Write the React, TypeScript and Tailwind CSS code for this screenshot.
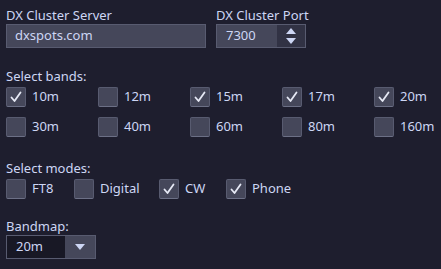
import React, { useState } from 'react';

const bands = ['10m', '12m', '15m', '17m', '20m', '30m', '40m', '60m', '80m', '160m'];
const modes = ['FT8', 'Digital', 'CW', 'Phone'];

const Check: React.FC<{ label: string; checked: boolean; onToggle: () => void; className?: string }> = ({
  label,
  checked,
  onToggle,
  className,
}) => (
  <label className={`flex items-center gap-[6px] cursor-pointer ${className ?? ''}`} onClick={onToggle}>
    <span className="w-[20px] h-[20px] bg-[#45475a] border border-[#585b70] border-b-[#6c7086] rounded-[2px] flex items-center justify-center">
      {checked && (
        <svg width="14" height="14" viewBox="0 0 14 14">
          <path d="M2.5 7.5 L5.5 11 L11.5 2.5" fill="none" stroke="#e6e9f5" strokeWidth="1.8" strokeLinecap="round" strokeLinejoin="round" />
        </svg>
      )}
    </span>
    <span>{label}</span>
  </label>
);

const App: React.FC = () => {
  const [selBands, setSelBands] = useState<string[]>(['10m', '15m', '17m', '20m']);
  const [selModes, setSelModes] = useState<string[]>(['CW', 'Phone']);

  const toggle = (list: string[], set: (v: string[]) => void, v: string) =>
    set(list.includes(v) ? list.filter((x) => x !== v) : [...list, v]);

  return (
    <div
      className="w-[441px] h-[269px] bg-[#1e1e2e] text-[#cdd6f4] text-[13px] px-[6px] pt-[6px]"
      style={{ fontFamily: '"Noto Sans", "Open Sans", sans-serif' }}
    >
      <div className="flex gap-[10px]">
        <div className="flex flex-col">
          <span className="leading-[18px]">DX Cluster Server</span>
          <div className="w-[200px] h-[24px] bg-[#45475a] border border-[#585b70] flex items-center px-[8px]">
            dxspots.com
          </div>
        </div>
        <div className="flex flex-col">
          <span className="leading-[18px]">DX Cluster Port</span>
          <div className="w-[90px] h-[24px] border border-[#585b70] flex">
            <div className="flex-1 bg-[#45475a] flex items-center px-[9px]">7300</div>
            <div className="w-[28px] bg-[#313244] flex flex-col items-center justify-center gap-[4px]">
              <svg width="10" height="6" viewBox="0 0 10 6"><path d="M0 6 L5 0 L10 6 Z" fill="#cdd6f4" /></svg>
              <svg width="10" height="6" viewBox="0 0 10 6"><path d="M0 0 L10 0 L5 6 Z" fill="#cdd6f4" /></svg>
            </div>
          </div>
        </div>
      </div>

      <div className="mt-[19px] leading-[18px]">Select bands:</div>
      <div className="grid grid-cols-[92px_92px_92px_92px_auto] gap-y-[10px] mt-[2px]">
        {bands.map((b) => (
          <Check key={b} label={b} checked={selBands.includes(b)} onToggle={() => toggle(selBands, setSelBands, b)} />
        ))}
      </div>

      <div className="mt-[22px] leading-[18px]">Select modes:</div>
      <div className="flex mt-[2px]">
        {modes.map((m, i) => (
          <Check
            key={m}
            label={m}
            checked={selModes.includes(m)}
            onToggle={() => toggle(selModes, setSelModes, m)}
            className={['w-[68px]', 'w-[85px]', 'w-[67px]', ''][i]}
          />
        ))}
      </div>

      <div className="mt-[19px] leading-[17px]">Bandmap:</div>
      <div className="w-[90px] h-[24px] border border-[#585b70] flex">
        <div className="flex-1 bg-[#181825] flex items-center px-[9px]">20m</div>
        <div className="w-[30px] bg-[#45475a] flex items-center justify-center">
          <svg width="10" height="6" viewBox="0 0 10 6"><path d="M0 0 L10 0 L5 6 Z" fill="#cdd6f4" /></svg>
        </div>
      </div>
    </div>
  );
};

export default App;
